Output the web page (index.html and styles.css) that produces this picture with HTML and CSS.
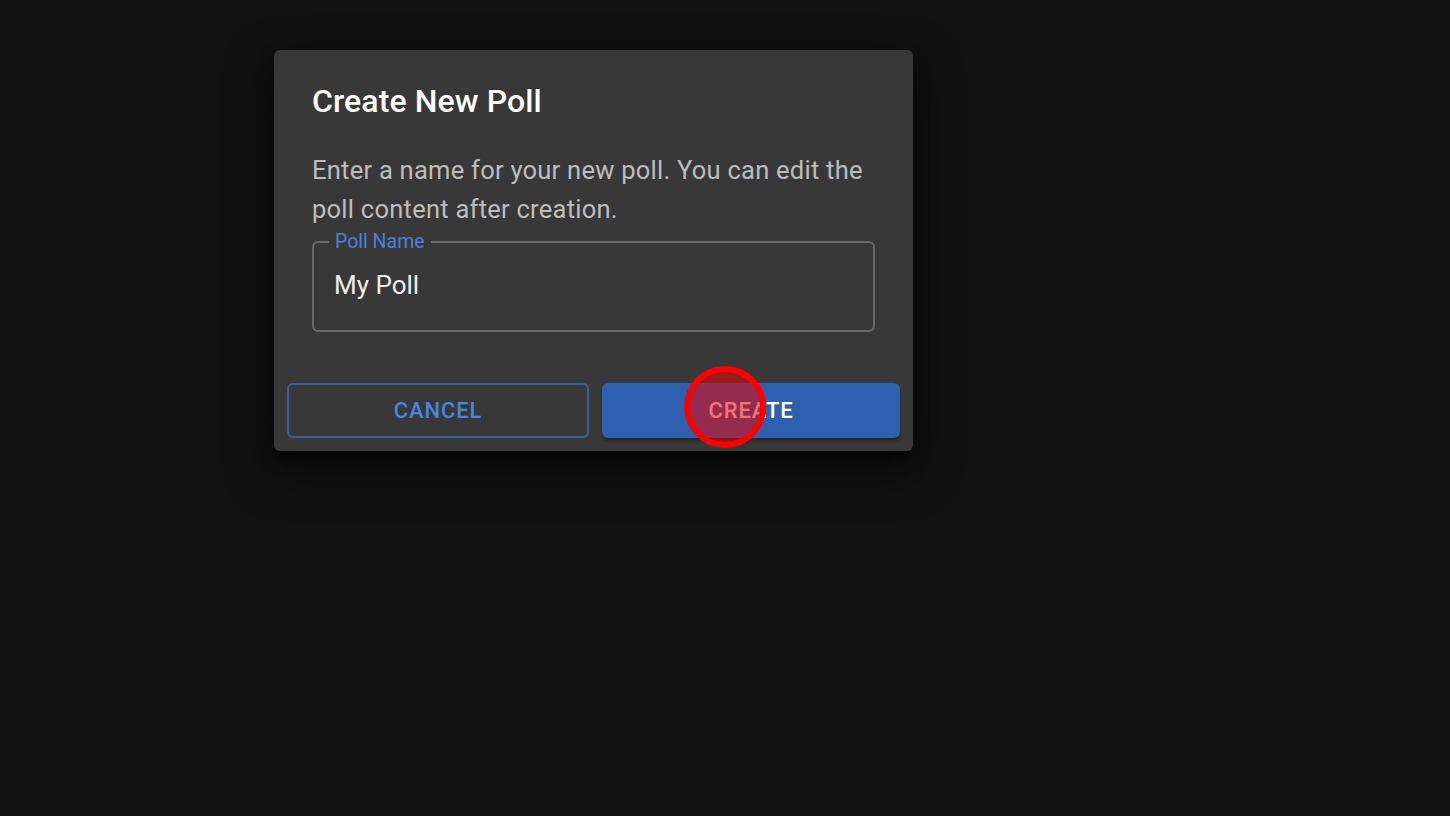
FILE: index.html
```html
<!DOCTYPE html>
<html>
<head>
<meta charset="utf-8">
<link rel="stylesheet" href="styles.css">
</head>
<body>
<div class="page">
  <div class="dialog">
    <h2 class="title">Create New Poll</h2>
    <div class="content">
      <p class="text">Enter a name for your new poll. You can edit the poll content after creation.</p>
      <fieldset class="field">
        <legend class="label">Poll Name</legend>
        <div class="value">My Poll</div>
      </fieldset>
    </div>
    <div class="actions">
      <button class="btn btn-outline">CANCEL</button>
      <button class="btn btn-filled">CREATE</button>
    </div>
    <div class="tap"></div>
  </div>
</div>
</body>
</html>
```

FILE: styles.css
```css
html, body {
  margin: 0;
  padding: 0;
  background: #111111;
  width: 1450px;
  height: 816px;
  overflow: hidden;
  font-family: Roboto, "Liberation Sans", sans-serif;
}
.page {
  padding: 50px 0 0 274px;
}
.dialog {
  position: relative;
  width: 639px;
  height: 401px;
  box-sizing: border-box;
  background: #383838;
  border-radius: 6px;
  box-shadow: 0 18px 46px rgba(0,0,0,0.55), 0 8px 16px rgba(0,0,0,0.4);
  display: flex;
  flex-direction: column;
}
.title {
  margin: 0;
  padding: 26px 38px 0 38px;
  font-size: 32px;
  font-weight: 500;
  line-height: 51px;
  color: #ffffff;
  letter-spacing: 0.1px;
}
.content {
  padding: 0 38px 0 38px;
}
.text {
  margin: 24px 0 0 0;
  font-size: 25.5px;
  line-height: 39px;
  color: #bdbdbd;
  letter-spacing: 0.25px;
}
.field {
  margin: 4px 0 0 0;
  width: 563px;
  height: 99px;
  box-sizing: border-box;
  border: 2px solid #6a6a6a;
  border-radius: 6px;
  padding: 0 20px;
}
.label {
  font-size: 19.5px;
  color: #4a82da;
  padding: 0 6px;
  margin-left: -5px;
  line-height: 18px;
}
.value {
  font-size: 26px;
  color: #eeeeee;
  line-height: 30px;
  padding-top: 19px;
}
.actions {
  margin-top: auto;
  padding: 13px;
  display: flex;
  gap: 13px;
}
.btn {
  flex: 1;
  height: 55px;
  border-radius: 6px;
  font-family: Roboto, "Liberation Sans", sans-serif;
  font-size: 22px;
  font-weight: 500;
  letter-spacing: 0.9px;
  box-sizing: border-box;
}
.btn-outline {
  background: transparent;
  border: 2px solid #3b5f9e;
  color: #4a85e0;
}
.btn-filled {
  background: #2e5fb0;
  border: none;
  color: #ffffff;
  box-shadow: 0 3px 3px rgba(0,0,0,0.3);
}
.tap {
  position: absolute;
  left: 410px;
  top: 316px;
  width: 82px;
  height: 82px;
  box-sizing: border-box;
  border-radius: 50%;
  border: 6px solid #ff0000;
  background: rgba(235,0,0,0.55);
}
```
